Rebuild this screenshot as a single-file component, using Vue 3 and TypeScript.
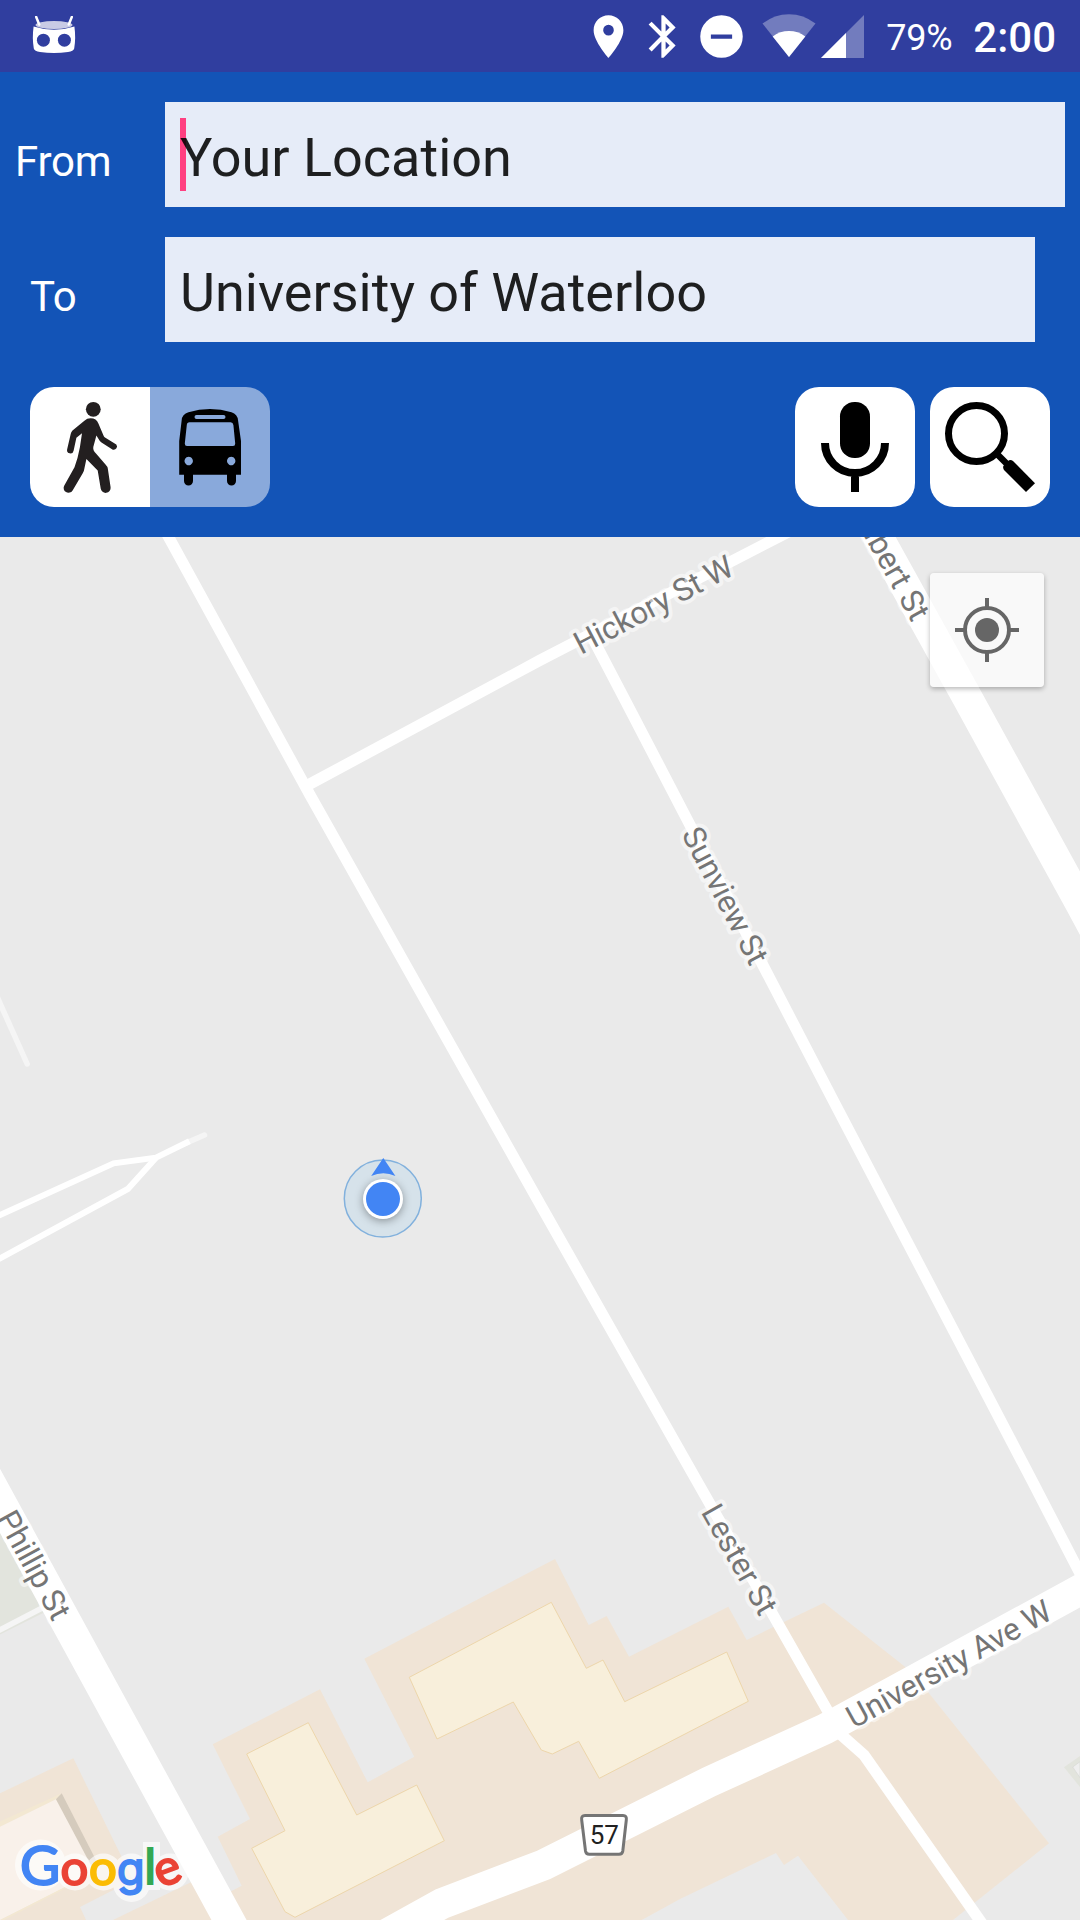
<script setup lang="ts">
interface StreetLabel {
  name: string
  x: number
  y: number
  angle: number
  length?: number
  anchor?: 'start' | 'end'
}

interface LogoLetter {
  char: string
  x: number
  y: number
  size: number
  color: string
  font?: string
  tilt?: number
}

const streets: StreetLabel[] = [
  { name: 'Hickory St W', x: 581, y: 655, angle: -27.6, length: 175 },
  { name: 'Albert St', x: 912, y: 623, angle: 61, anchor: 'end' },
  { name: 'Sunview St', x: 681, y: 834, angle: 62.5, length: 150 },
  { name: 'Lester St', x: 700.5, y: 1512, angle: 60.6, length: 121 },
  { name: 'University Ave W', x: 854, y: 1729, angle: -29, length: 229 },
  { name: 'Phillip St', x: -4, y: 1518, angle: 61.4, length: 119 },
]

const roads: { points: string; width: number }[] = [
  { points: '163,527 168.6,537 310,795 414,980 540,1204 696.3,1480 830,1715', width: 11.2 },
  { points: '308,785 540,660.3 778.5,537 798,527', width: 11.2 },
  { points: '591,635 625,700 833,1100 1031.7,1480 1086,1585', width: 11.2 },
  { points: '873,527 878.3,537 968.6,700 1080,903 1100,940', width: 30.4 },
  { points: '-30,1446 -17.4,1469 229,1920 240,1940', width: 30.8 },
  { points: '1100,1579 825,1729 709,1782 544,1864.7 442,1903.5 380,1938', width: 31 },
  { points: '830,1725 864,1755 970.3,1906.7 990,1935', width: 11.4 },
  { points: '-10,1220 0,1215 113.6,1163.3 156,1157.7 189.4,1141.3', width: 6 },
  { points: '-10,1264 0,1258.3 127.8,1189 156,1157.7', width: 6 },
]

const lots: string[] = [
  '212.7,1744.3 320,1689.3 367.7,1782.3 414.3,1756.7 364.3,1658.7 555,1559 588.7,1625 606.7,1616 629,1656.7 728.3,1606.7 746.7,1640 824,1602.7 905,1666.7 928,1692 1049,1843.3 953,1920 848,1920 798,1855.7 784,1865 776,1853 680,1899 641.7,1920 230,1920 220,1897 241.7,1885.7 217.7,1836.7 250,1819',
  '0,1793.3 73.3,1758.3 133,1880 80,1907 86,1920 0,1920',
  '113,1920 192,1881.7 214,1920',
]

const buildings: string[] = [
  '246.7,1754 308.3,1722.7 356.7,1815 416.7,1785 444.3,1840.7 295,1917.3 285,1911.7 251.7,1848.3 285,1830.7',
  '409.3,1677.3 551.3,1602.3 586.3,1668.3 603,1660 624.7,1701.7 726.7,1652 748.3,1701.3 599.3,1778.3 578.7,1741.3 552.3,1754 541.3,1750 513.3,1702 437,1739',
]

const logo: LogoLetter[] = [
  { char: 'G', x: 20, y: 1884.5, size: 55, color: '#4285f4' },
  { char: 'o', x: 60.5, y: 1884.5, size: 49, color: '#ea4335' },
  { char: 'o', x: 89, y: 1884.5, size: 49, color: '#fbbc05' },
  { char: 'g', x: 117, y: 1884.5, size: 45, color: '#4285f4', font: 'Inter' },
  { char: 'l', x: 144.5, y: 1884, size: 48, color: '#34a853' },
  { char: 'e', x: 160, y: 1888, size: 49, color: '#ea4335', tilt: -20 },
]
</script>

<template>
  <div class="screen">
    <header class="status">
      <svg class="cid" width="44" height="38" viewBox="32 16 44 38">
        <path d="M33.6 26.5Q54 33 74.400 26.500Q76 38 74.200 48.500Q73.500 51 68 52Q54 54 40 52Q34.500 51 33.800 48.500Q32 38 33.600 26.500Z" fill="#fff" />
        <ellipse cx="54" cy="25" rx="18.500" ry="4" fill="#c9cbe5" />
        <path d="M36.200 17l3 7.500M71.800 17l-3 7.500" stroke="#fff" stroke-width="2.500" stroke-linecap="round" />
        <circle cx="43.400" cy="40.200" r="6.500" fill="#303e9f" />
        <circle cx="64.400" cy="40.200" r="6.500" fill="#303e9f" />
      </svg>
      <div class="indicators">
        <svg width="51" height="51" viewBox="0 0 24 24" fill="#fff">
          <path d="M12 2C8.130 2 5 5.130 5 9c0 5.250 7 13 7 13s7-7.750 7-13c0-3.870-3.130-7-7-7zm0 9.500a2.500 2.500 0 1 1 0-5 2.500 2.500 0 0 1 0 5z" />
        </svg>
        <svg class="bluetooth" width="51" height="51" viewBox="0 0 24 24" fill="#fff">
          <path d="M17.710 7.710L12 2h-1v7.590L6.410 5 5 6.410 10.590 12 5 17.590 6.410 19 11 14.410V22h1l5.710-5.710-4.300-4.290 4.300-4.290zM13 5.830l1.880 1.880L13 9.590V5.830zm1.880 10.460L13 18.170v-3.760l1.880 1.880z" />
        </svg>
        <svg class="dnd" width="51" height="51" viewBox="0 0 24 24" fill="#fff">
          <path d="M12 2a10 10 0 1 0 0 20 10 10 0 0 0 0-20zm5 11H7v-2h10v2z" />
        </svg>
        <svg class="wifi" width="54" height="44" viewBox="762.500 14 54 44">
          <path d="M789.500 57L763 23.500Q775 14.200 789.500 14.200T816 23.500Z" fill="#fff" opacity=".32" />
          <path d="M789.500 57L773.200 36.400Q780.500 31 789.500 31T805.800 36.400Z" fill="#fff" />
        </svg>
        <svg class="signal" width="43" height="43" viewBox="0 0 43 43" fill="#fff">
          <path d="M0 43L43 0V43Z" opacity=".32" />
          <path d="M0 43L25 18V43Z" />
        </svg>
        <span class="battery">79%</span>
        <span class="clock">2:00</span>
      </div>
    </header>

    <section class="panel">
      <div class="row">
        <label class="label">From</label>
        <div class="field"><i class="caret"></i><span>Your Location</span></div>
      </div>
      <div class="row row-to">
        <label class="label">To</label>
        <div class="field"><span>University of Waterloo</span></div>
      </div>
      <div class="actions">
        <div class="modes">
          <button class="mode" aria-label="Walk">
            <svg width="120" height="120" viewBox="0 0 120 120" fill="#231f20">
              <circle cx="63.300" cy="22.300" r="7.400" />
              <path d="M60.600 31.300Q57 31.300 54.400 33.700L42.500 43.500Q41 45 40.700 47L37.100 62.500A3.300 3.300 0 0 0 43.600 63.700L46.400 50.700L52 46.300L49.900 60.300Q48 71 44.500 80.300L34.300 98.500A4.700 4.700 0 0 0 42.600 103.400L52.600 86.500Q54.200 84 54.500 81L56.400 72L67.700 83.500L70.700 101.500A4.900 4.900 0 0 0 80.600 100.300L77.800 81.500Q77.500 79.500 75.500 77.500L66 66.500Q62.800 63.500 63.300 60L66.400 48.500L69.500 53.500Q70.200 54.700 71.500 55.500L82.800 62.700A3.300 3.300 0 0 0 86.300 57.500L75 50.500Q74 50 73.500 48.500L68.400 36.500Q66.500 31.300 60.600 31.300Z" />
            </svg>
          </button>
          <button class="mode mode-off" aria-label="Bus">
            <svg width="120" height="120" viewBox="0 0 120 120" fill="#000">
              <path fill-rule="evenodd" d="M29.200 87.800V54L31.700 33Q32 27.500 38.500 25.200Q49 22 60 22T81.500 25.200Q87.500 27.500 88 33L91 54V87.800H86V94a4.500 4.500 0 0 1-9 0V87.800H43V94a4.500 4.500 0 0 1-9 0V87.800ZM46.500 28a2 2 0 0 0 0 4H73.500a2 2 0 0 0 0-4ZM39.500 35.300Q37 35.300 36.800 38L34.800 56.500Q34.800 59 37 59H83Q85.300 59 85.200 56.500L83.400 38Q83 35.300 80.700 35.300ZM38.700 69.800a4.200 4.200 0 1 0 .01 0ZM81.200 69.800a4.200 4.200 0 1 0 .01 0Z" />
            </svg>
          </button>
        </div>
        <div class="tools">
          <button class="tool" aria-label="Voice search">
            <svg width="120" height="120" viewBox="0 0 120 120">
              <rect x="45" y="15" width="30" height="56" rx="14.500" />
              <path d="M30 56A30 30 0 0 0 90 56M60 86V105" fill="none" stroke="#000" stroke-width="8" />
            </svg>
          </button>
          <button class="tool" aria-label="Search">
            <svg width="120" height="120" viewBox="0 0 120 120">
              <circle cx="46.500" cy="46.500" r="28" fill="none" stroke="#000" stroke-width="7" />
              <path d="M66 66L77 77" stroke="#000" stroke-width="6.500" />
              <path d="M73.300 79L79 73.300Q81 72.500 83 74L105 96.300L96 105L74 83Q72.800 81 73.300 79Z" />
            </svg>
          </button>
        </div>
      </div>
    </section>

    <main class="map">
      <svg class="tiles" width="1080" height="1383" viewBox="0 537 1080 1383">
        <polygon points="0,1500 60,1604.500 0,1634.500" fill="#e2e4dd" />
        <polygon points="1064,1767.300 1080,1756 1080,1787" fill="#e2e4dd" />
        <polygon points="1072.700,1767 1080,1761.700 1080,1777.700" fill="#efefef" stroke="#d9dad6" stroke-width=".7" />
        <polygon v-for="lot in lots" :key="lot" :points="lot" fill="#f0e4d6" />
        <polygon v-for="b in buildings" :key="b" :points="b" fill="#f8efdb" stroke="#edd6ab" stroke-width="1" />
        <polygon points="0,1821.500 61.700,1793.300 56,1799.300 0,1827" fill="#f3e8d2" />
        <polygon points="0,1826.700 56,1799.300 96,1872 0,1920" fill="#f9f1ea" />
        <path d="M0 1921L8 1917L96 1872" fill="none" stroke="#f3e8d2" stroke-width="1.500" />
        <polygon points="56,1799.300 61.700,1793.300 97,1862 94,1871" fill="#d5cbbd" />
        <g fill="none" stroke="#f5f5f5" stroke-width="5.500" stroke-linecap="round">
          <path d="M-10 981L27.200 1064" />
          <path d="M185 1143.500L204.500 1135" />
          <path d="M-10 1635L45 1606.500" />
        </g>
        <polyline v-for="r in roads" :key="r.points" :points="r.points" :stroke-width="r.width" fill="none" stroke="#fff" />

        <text
          v-for="s in streets"
          :key="s.name"
          class="street"
          :text-anchor="s.anchor ?? 'start'"
          :textLength="s.length"
          :transform="`translate(${s.x} ${s.y}) rotate(${s.angle})`"
        >{{ s.name }}</text>

        <path d="M585 1815.500H623Q627 1815.500 626.300 1820L622.800 1851Q622.300 1854.300 619 1854.300H589.300Q586 1854.300 585.500 1851L581.700 1820Q581 1815.500 585 1815.500Z" fill="#fff" stroke="#757575" stroke-width="3" />
        <text class="route" x="604.300" y="1844" text-anchor="middle">57</text>

        <circle cx="382.800" cy="1198.500" r="38.500" fill="#d6e2ea" stroke="#82b1dd" stroke-width="1.500" />
        <circle class="dot" cx="383" cy="1199" r="20" fill="#fff" />
        <circle cx="383" cy="1199" r="17" fill="#4285f4" />
        <path d="M383.300 1158L395.400 1176Q383.300 1170.500 371.200 1176Z" fill="#4285f4" />

        <g fill="#fff" opacity=".65">
          <circle cx="40.500" cy="1865" r="25.500" />
          <circle cx="75" cy="1872" r="18.500" />
          <circle cx="103.500" cy="1872" r="18.500" />
          <circle cx="131.500" cy="1872" r="18.500" />
          <circle cx="131.500" cy="1883.500" r="18.500" />
          <rect x="143" y="1842" width="17" height="48" />
          <circle cx="170" cy="1872" r="18.500" />
        </g>
        <text class="logo"><tspan v-for="l in logo" :key="l.x" :x="l.x" :y="l.y" :font-size="l.size" :font-family="l.font" :rotate="l.tilt" :fill="l.color" :stroke="l.color">{{ l.char }}</tspan></text>
      </svg>
      <button class="locate" aria-label="My location">
        <svg width="66" height="66" viewBox="-33 -33 66 66" fill="none" stroke="#666" stroke-width="4">
          <circle r="12" fill="#666" stroke="none" />
          <circle r="22" />
          <path d="M0-32V-23M0 32V23M-32 0H-23M32 0H23" />
        </svg>
      </button>
    </main>
  </div>
</template>

<style>
body {
  margin: 0;
}
</style>

<style scoped>
.screen {
  width: 1080px;
  height: 1920px;
  display: flex;
  flex-direction: column;
  overflow: hidden;
  font-family: Roboto, "Liberation Sans", sans-serif;
}
svg {
  display: block;
  flex: none;
}
button {
  border: 0;
  padding: 0;
  margin: 0;
}
.status {
  height: 72px;
  flex: none;
  display: flex;
  align-items: center;
  justify-content: space-between;
  box-sizing: border-box;
  padding: 0 24px 0 32px;
  background: #303e9f;
  color: #fff;
}
.cid {
  margin-bottom: 2px;
}
.indicators {
  display: flex;
  align-items: center;
}
.bluetooth {
  margin-left: 4px;
}
.dnd {
  margin-left: 7px;
}
.wifi {
  margin-left: 15px;
}
.signal {
  margin: 0 22px 0 5px;
}
.battery {
  width: 65px;
  font-size: 36px;
  line-height: 42px;
  margin-top: 3px;
  letter-spacing: -0.3px;
}
.clock {
  margin: 3px 0 0 22px;
  font-size: 42px;
  line-height: 48px;
  font-weight: 500;
}
.panel {
  height: 465px;
  flex: none;
  box-sizing: border-box;
  padding: 30px 15px 30px;
  background: #1354b7;
  display: flex;
  flex-direction: column;
  gap: 30px;
}
.row {
  display: flex;
  align-items: center;
  height: 105px;
}
.row-to {
  padding: 0 30px 0 15px;
}
.label {
  width: 150px;
  padding-top: 15px;
  font-size: 42px;
  line-height: 50px;
  letter-spacing: -0.2px;
  color: #fff;
}
.row-to .label {
  width: 135px;
}
.field {
  position: relative;
  flex: 1;
  height: 105px;
  box-sizing: border-box;
  padding-left: 15px;
  background: #e6ecf8;
  color: rgba(0, 0, 0, 0.87);
  font-size: 54px;
  line-height: 112px;
  white-space: nowrap;
}
.field span {
  position: relative;
}
.caret {
  position: absolute;
  left: 15px;
  top: 16px;
  width: 6px;
  height: 73px;
  background: #ff4081;
}
.actions {
  display: flex;
  justify-content: space-between;
  padding: 15px 15px 0;
}
.modes {
  display: flex;
  border-radius: 24px;
  overflow: hidden;
}
.mode {
  width: 120px;
  height: 120px;
  background: #fff;
}
.mode-off {
  background: #89a9db;
}
.tools {
  display: flex;
  gap: 15px;
}
.tool {
  width: 120px;
  height: 120px;
  border-radius: 24px;
  background: #fff;
}
.map {
  position: relative;
  flex: 1;
  background: #eaeaea;
  overflow: hidden;
}
.street {
  font-size: 31.5px;
  fill: #757575;
  stroke: rgba(255, 255, 255, 0.5);
  stroke-width: 8px;
  stroke-linejoin: round;
  paint-order: stroke;
}
.route {
  font-size: 26px;
  fill: #212121;
}
.dot {
  filter: drop-shadow(0 2px 4px rgba(0, 0, 0, 0.35));
}
.logo {
  font-family: Lato, sans-serif;
  font-weight: 400;
  stroke-width: 2px;
}
.locate {
  position: absolute;
  right: 36px;
  top: 36px;
  width: 114px;
  height: 114px;
  display: flex;
  align-items: center;
  justify-content: center;
  border-radius: 4px;
  background: rgba(255, 255, 255, 0.7);
  box-shadow: 0 2px 5px rgba(0, 0, 0, 0.28);
}
</style>
